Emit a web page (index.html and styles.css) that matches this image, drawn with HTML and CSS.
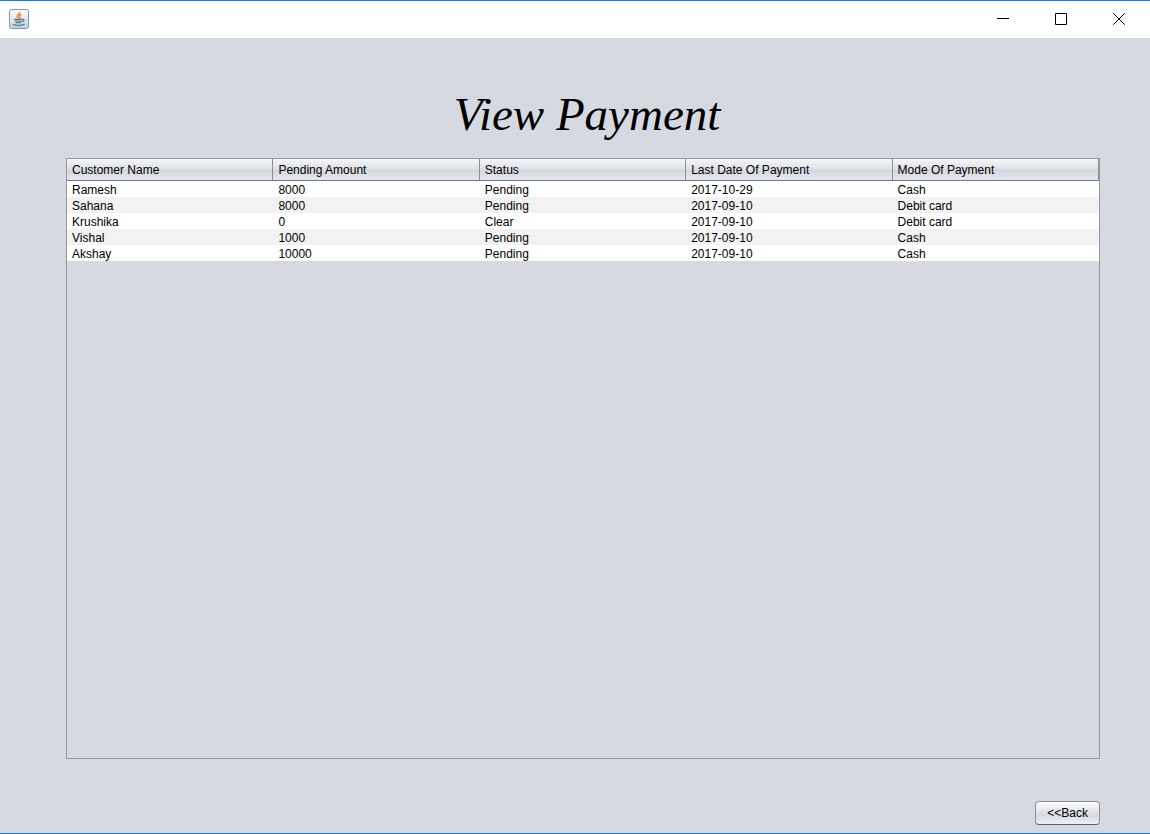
FILE: index.html
```html
<!DOCTYPE html>
<html lang="en">
<head>
<meta charset="utf-8">
<meta name="viewport" content="width=device-width, initial-scale=1">
<title>View Payment</title>
<link rel="stylesheet" href="styles.css">
</head>
<body>
<div class="window">
  <header class="titlebar">
    <svg class="app-icon" viewBox="0 0 20 20" aria-hidden="true">
      <defs>
        <linearGradient id="tile" x1="0" y1="0" x2="0" y2="1">
          <stop offset="0" stop-color="#ffffff"/>
          <stop offset="1" stop-color="#c3ced8"/>
        </linearGradient>
      </defs>
      <rect x=".5" y=".5" width="19" height="19" rx="2" fill="url(#tile)" stroke="#8497a7"/>
      <path d="M10.800 3c.8 1.900-3.300 2.600-2.600 4.500.3.900 1.200 1.100 1.600 2M12.300 5.500c-1.800.6-2.300 1.300-1.700 2.200.5.700.2 1.200-.2 1.700" fill="none" stroke="#f08a3a" stroke-width="1.600"/>
      <path d="M5 10.300h8l-1 3.700H7z" fill="#8fa9bc"/>
      <path d="M5 10.400h8.500M6.500 13.600h5.500M13.300 10.400c2.500-.4 2 2-.8 2.400M3.800 15.300c2 1.500 10 1.400 12-.3" fill="none" stroke="#557b98" stroke-width="1.200"/>
    </svg>
    <div class="controls">
      <button class="control" type="button" aria-label="Minimize"><svg class="glyph" viewBox="0 0 12 12"><path d="M0 5.500h12"/></svg></button>
      <button class="control" type="button" aria-label="Maximize"><svg class="glyph" viewBox="0 0 12 12"><path d="M.5.5h11v11H.5z"/></svg></button>
      <button class="control" type="button" aria-label="Close"><svg class="glyph" viewBox="0 0 12 12"><path d="M.3.3l11.400 11.400M11.700.3L.3 11.700"/></svg></button>
    </div>
  </header>
  <main class="content">
    <h1 class="title">View Payment</h1>
    <div class="table-pane">
      <table class="payments">
        <thead>
          <tr><th scope="col">Customer Name</th><th scope="col">Pending Amount</th><th scope="col">Status</th><th scope="col">Last Date Of Payment</th><th scope="col">Mode Of Payment</th></tr>
        </thead>
        <tbody>
          <tr><td>Ramesh</td><td>8000</td><td>Pending</td><td>2017-10-29</td><td>Cash</td></tr>
          <tr><td>Sahana</td><td>8000</td><td>Pending</td><td>2017-09-10</td><td>Debit card</td></tr>
          <tr><td>Krushika</td><td>0</td><td>Clear</td><td>2017-09-10</td><td>Debit card</td></tr>
          <tr><td>Vishal</td><td>1000</td><td>Pending</td><td>2017-09-10</td><td>Cash</td></tr>
          <tr><td>Akshay</td><td>10000</td><td>Pending</td><td>2017-09-10</td><td>Cash</td></tr>
        </tbody>
      </table>
    </div>
    <button class="back" type="button">&lt;&lt;Back</button>
  </main>
</div>
</body>
</html>
```

FILE: styles.css
```css
* {
  box-sizing: border-box;
}

body {
  margin: 0;
  color: #000;
  font-family: "Liberation Sans", Arial, sans-serif;
  font-size: 12px;
}

.window {
  display: flex;
  flex-direction: column;
  min-height: 100vh;
  border-top: 1px solid #1a80d6;
  border-bottom: 1px solid #1a80d6;
  background: #d6d9e0;
}

.titlebar {
  display: flex;
  align-items: center;
  justify-content: space-between;
  height: 37px;
  padding: 0 2px 2px 9px;
  background: #fff;
}

.app-icon {
  width: 20px;
  height: 20px;
}

.controls {
  display: flex;
}

.control {
  display: flex;
  align-items: center;
  justify-content: center;
  width: 58px;
  height: 34px;
  padding: 0;
  border: 0;
  background: none;
}

.glyph {
  width: 12px;
  height: 12px;
  fill: none;
  stroke: #000;
}

.content {
  display: flex;
  flex: 1;
  flex-direction: column;
  padding: 48px 50px 8px 66px;
}

.title {
  margin: 0 0 16px;
  padding-left: 8px;
  font-family: "Liberation Serif", "Times New Roman", serif;
  font-size: 47px;
  font-style: italic;
  font-weight: 400;
  line-height: 56px;
  text-align: center;
}

.table-pane {
  flex: 1;
  border: 1px solid #9297a1;
}

.payments {
  width: 100%;
  border-collapse: separate;
  border-spacing: 0;
  table-layout: fixed;
}

.payments th {
  height: 22px;
  padding: 0 5px;
  border-right: 1px solid #8b909a;
  border-bottom: 1px solid #6f7682;
  background: linear-gradient(#f5f6f8, #dfe1e6 45%, #d5d8de 55%, #e4e8ef);
  font-weight: 400;
  text-align: left;
}

.payments td {
  height: 16px;
  padding: 2px 5px 0;
  background: #fff;
  line-height: 14px;
}

.payments tr:nth-child(even) td {
  background: #f2f2f2;
}

.back {
  align-self: flex-end;
  height: 24px;
  margin-top: 42px;
  padding: 0 11px;
  border: 1px solid #8b8f98;
  border-bottom-color: #5c616a;
  border-radius: 4px;
  background: linear-gradient(#fafbfc, #dfe1e7 50%, #d6d9e0 60%, #eceff5);
  color: #000;
  font: inherit;
}
```
